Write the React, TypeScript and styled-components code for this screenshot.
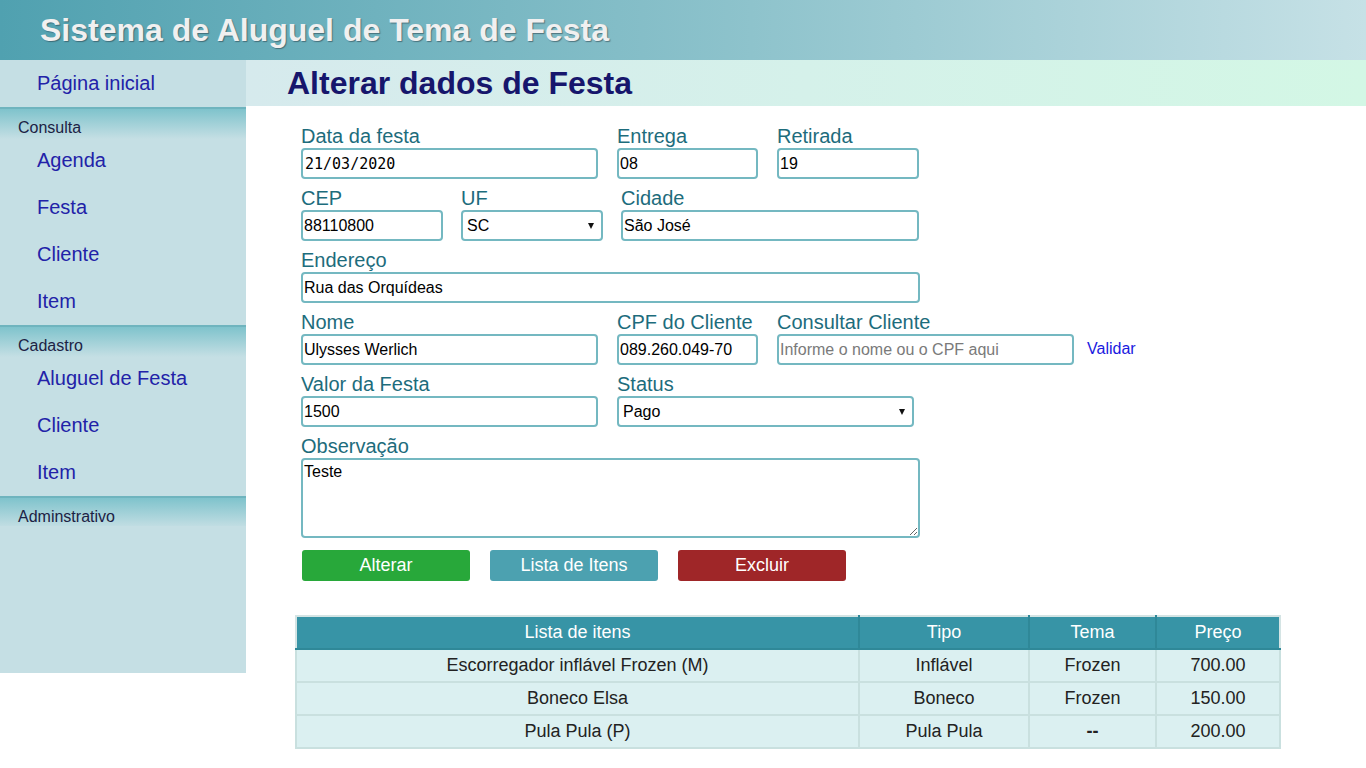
import React from "react";
import styled, { createGlobalStyle } from "styled-components";

const Global = createGlobalStyle`
  html, body { margin: 0; padding: 0; background: #ffffff; }
  body { font-family: "Liberation Sans", Arial, sans-serif; }
  * { box-sizing: border-box; }
`;

const Page = styled.div`
  width: 1366px;
  min-height: 768px;
  display: grid;
  grid-template-rows: 60px auto;
`;

const TopBar = styled.header`
  height: 60px;
  background: linear-gradient(to right, #50a1b0 0%, #8ec3cc 55%, #c6e1e6 100%);
  display: flex;
  align-items: center;
  padding-left: 40px;
`;

const AppTitle = styled.h1`
  margin: 0;
  font-size: 32px;
  font-weight: bold;
  color: #f0f0f0;
  text-shadow: 1px 1px 1px rgba(40, 60, 70, 0.55);
`;

const Body = styled.div`
  display: grid;
  grid-template-columns: 246px 1fr;
  align-items: start;
`;

const Sidebar = styled.nav`
  height: 613px;
  background: #c5dfe4;
  display: flex;
  flex-direction: column;
`;

const HomeLink = styled.a`
  height: 47px;
  display: flex;
  align-items: center;
  padding-left: 37px;
  font-size: 20px;
  color: #2222a8;
  text-decoration: none;
`;

const Section = styled.div`
  border-top: 2px solid #6fb4be;
  background: linear-gradient(to bottom, #7fc3cc 0px, #c5dfe4 30px);
`;

const SectionTitle = styled.div`
  padding: 10px 0 0 18px;
  height: 28px;
  line-height: 18px;
  font-size: 16px;
  color: #1c2244;
`;

const NavItem = styled.a`
  height: 47px;
  display: flex;
  align-items: center;
  padding-left: 37px;
  font-size: 20px;
  color: #2222a8;
  text-decoration: none;
`;

const Main = styled.main`
  display: flex;
  flex-direction: column;
`;

const Heading = styled.div`
  height: 46px;
  background: linear-gradient(to right, #d6eaed 0%, #d5f1ea 50%, #d3f7e5 100%);
  display: flex;
  align-items: center;
  padding-left: 41px;
`;

const HeadingText = styled.h2`
  margin: 0;
  font-size: 32px;
  font-weight: bold;
  color: #16166c;
`;

const Form = styled.form`
  padding: 19px 0 0 55px;
  display: flex;
  flex-direction: column;
  gap: 8px;
`;

const Row = styled.div`
  display: flex;
  align-items: flex-end;
`;

const Field = styled.label<{ $w: number; $ml?: number }>`
  display: flex;
  flex-direction: column;
  width: ${(p) => p.$w}px;
  margin-left: ${(p) => p.$ml ?? 0}px;
`;

const LabelText = styled.span`
  font-size: 20px;
  line-height: 23px;
  color: #1d6c7c;
`;

const inputBase = `
  height: 31px;
  border: 2px solid #74b8c1;
  border-radius: 4px;
  padding: 0 0 0 1px;
  font-size: 16px;
  font-family: "Liberation Sans", Arial, sans-serif;
  color: #000;
  background: #fff;
  outline: none;
  width: 100%;
`;

const Input = styled.input<{ $mono?: boolean }>`
  ${inputBase}
  ${(p) =>
    p.$mono
      ? `font-family: "DejaVu Sans Mono", "Liberation Mono", monospace; font-size: 15px; padding-left: 2px;`
      : ""}
  &::placeholder {
    color: #7a7a7a;
  }
`;

const SelectWrap = styled.div`
  position: relative;
  width: 100%;
  &::after {
    content: "";
    position: absolute;
    right: 9px;
    top: 13px;
    border-left: 3.5px solid transparent;
    border-right: 3.5px solid transparent;
    border-top: 6px solid #111;
    pointer-events: none;
  }
`;

const Select = styled.select`
  ${inputBase}
  appearance: none;
  -webkit-appearance: none;
  padding-left: 4px;
`;

const TextArea = styled.textarea`
  ${inputBase}
  height: 80px;
  padding: 2px 0 0 1px;
  resize: vertical;
  line-height: 19px;
`;

const LinkText = styled.a`
  margin-left: 13px;
  margin-bottom: 7px;
  font-size: 16px;
  color: #1a1ae0;
  text-decoration: none;
`;

const Buttons = styled.div`
  display: flex;
  gap: 20px;
  margin-top: 4px;
  padding-left: 1px;
`;

const Button = styled.button<{ $bg: string }>`
  width: 168px;
  height: 31px;
  border: none;
  border-radius: 3px;
  background: ${(p) => p.$bg};
  color: #ffffff;
  font-size: 18px;
  font-family: "Liberation Sans", Arial, sans-serif;
  cursor: pointer;
`;

const Table = styled.table`
  margin: 34px 0 0 49px;
  width: 984px;
  border-collapse: collapse;
  font-size: 18px;
  table-layout: fixed;
`;

const Th = styled.th<{ $w: number }>`
  width: ${(p) => p.$w}px;
  height: 33px;
  background: #3794a6;
  color: #ffffff;
  font-weight: normal;
  border: 2px solid #2f8898;
  border-top-color: #d4e4e4;
  text-align: center;
  padding: 0;
  &:first-child { border-left-color: #d4e4e4; }
  &:last-child { border-right-color: #d4e4e4; }
`;

const Td = styled.td<{ $bold?: boolean }>`
  height: 33px;
  background: #dbf0f1;
  color: #222222;
  border: 2px solid #c9e0df;
  text-align: center;
  padding: 0;
  font-weight: ${(p) => (p.$bold ? "bold" : "normal")};
`;

const items = [
  ["Escorregador inflável Frozen (M)", "Inflável", "Frozen", "700.00"],
  ["Boneco Elsa", "Boneco", "Frozen", "150.00"],
  ["Pula Pula (P)", "Pula Pula", "--", "200.00"],
];

export default function App() {
  return (
    <Page>
      <Global />
      <TopBar>
        <AppTitle>Sistema de Aluguel de Tema de Festa</AppTitle>
      </TopBar>
      <Body>
        <Sidebar>
          <HomeLink href="#">Página inicial</HomeLink>
          <Section>
            <SectionTitle>Consulta</SectionTitle>
            <NavItem href="#">Agenda</NavItem>
            <NavItem href="#">Festa</NavItem>
            <NavItem href="#">Cliente</NavItem>
            <NavItem href="#">Item</NavItem>
          </Section>
          <Section>
            <SectionTitle>Cadastro</SectionTitle>
            <NavItem href="#">Aluguel de Festa</NavItem>
            <NavItem href="#">Cliente</NavItem>
            <NavItem href="#">Item</NavItem>
          </Section>
          <Section>
            <SectionTitle>Adminstrativo</SectionTitle>
          </Section>
        </Sidebar>
        <Main>
          <Heading>
            <HeadingText>Alterar dados de Festa</HeadingText>
          </Heading>
          <Form onSubmit={(e) => e.preventDefault()}>
            <Row>
              <Field $w={297}>
                <LabelText>Data da festa</LabelText>
                <Input $mono defaultValue="21/03/2020" />
              </Field>
              <Field $w={141} $ml={19}>
                <LabelText>Entrega</LabelText>
                <Input defaultValue="08" />
              </Field>
              <Field $w={142} $ml={19}>
                <LabelText>Retirada</LabelText>
                <Input defaultValue="19" />
              </Field>
            </Row>
            <Row>
              <Field $w={142}>
                <LabelText>CEP</LabelText>
                <Input defaultValue="88110800" />
              </Field>
              <Field $w={142} $ml={18}>
                <LabelText>UF</LabelText>
                <SelectWrap>
                  <Select defaultValue="SC">
                    <option>SC</option>
                    <option>PR</option>
                    <option>RS</option>
                  </Select>
                </SelectWrap>
              </Field>
              <Field $w={298} $ml={18}>
                <LabelText>Cidade</LabelText>
                <Input defaultValue="São José" />
              </Field>
            </Row>
            <Row>
              <Field $w={619}>
                <LabelText>Endereço</LabelText>
                <Input defaultValue="Rua das Orquídeas" />
              </Field>
            </Row>
            <Row>
              <Field $w={297}>
                <LabelText>Nome</LabelText>
                <Input defaultValue="Ulysses Werlich" />
              </Field>
              <Field $w={141} $ml={19}>
                <LabelText>CPF do Cliente</LabelText>
                <Input defaultValue="089.260.049-70" />
              </Field>
              <Field $w={297} $ml={19}>
                <LabelText>Consultar Cliente</LabelText>
                <Input placeholder="Informe o nome ou o CPF aqui" />
              </Field>
              <LinkText href="#">Validar</LinkText>
            </Row>
            <Row>
              <Field $w={297}>
                <LabelText>Valor da Festa</LabelText>
                <Input defaultValue="1500" />
              </Field>
              <Field $w={297} $ml={19}>
                <LabelText>Status</LabelText>
                <SelectWrap>
                  <Select defaultValue="Pago">
                    <option>Pago</option>
                    <option>Pendente</option>
                  </Select>
                </SelectWrap>
              </Field>
            </Row>
            <Row>
              <Field $w={619}>
                <LabelText>Observação</LabelText>
                <TextArea defaultValue="Teste" />
              </Field>
            </Row>
            <Buttons>
              <Button type="button" $bg="#28a83a">Alterar</Button>
              <Button type="button" $bg="#4ca1b0">Lista de Itens</Button>
              <Button type="button" $bg="#9f2628">Excluir</Button>
            </Buttons>
          </Form>
          <Table>
            <thead>
              <tr>
                <Th $w={563}>Lista de itens</Th>
                <Th $w={170}>Tipo</Th>
                <Th $w={127}>Tema</Th>
                <Th $w={124}>Preço</Th>
              </tr>
            </thead>
            <tbody>
              {items.map((r, i) => (
                <tr key={i}>
                  {r.map((c, j) => (
                    <Td key={j} $bold={c === "--"}>
                      {c}
                    </Td>
                  ))}
                </tr>
              ))}
            </tbody>
          </Table>
        </Main>
      </Body>
    </Page>
  );
}
